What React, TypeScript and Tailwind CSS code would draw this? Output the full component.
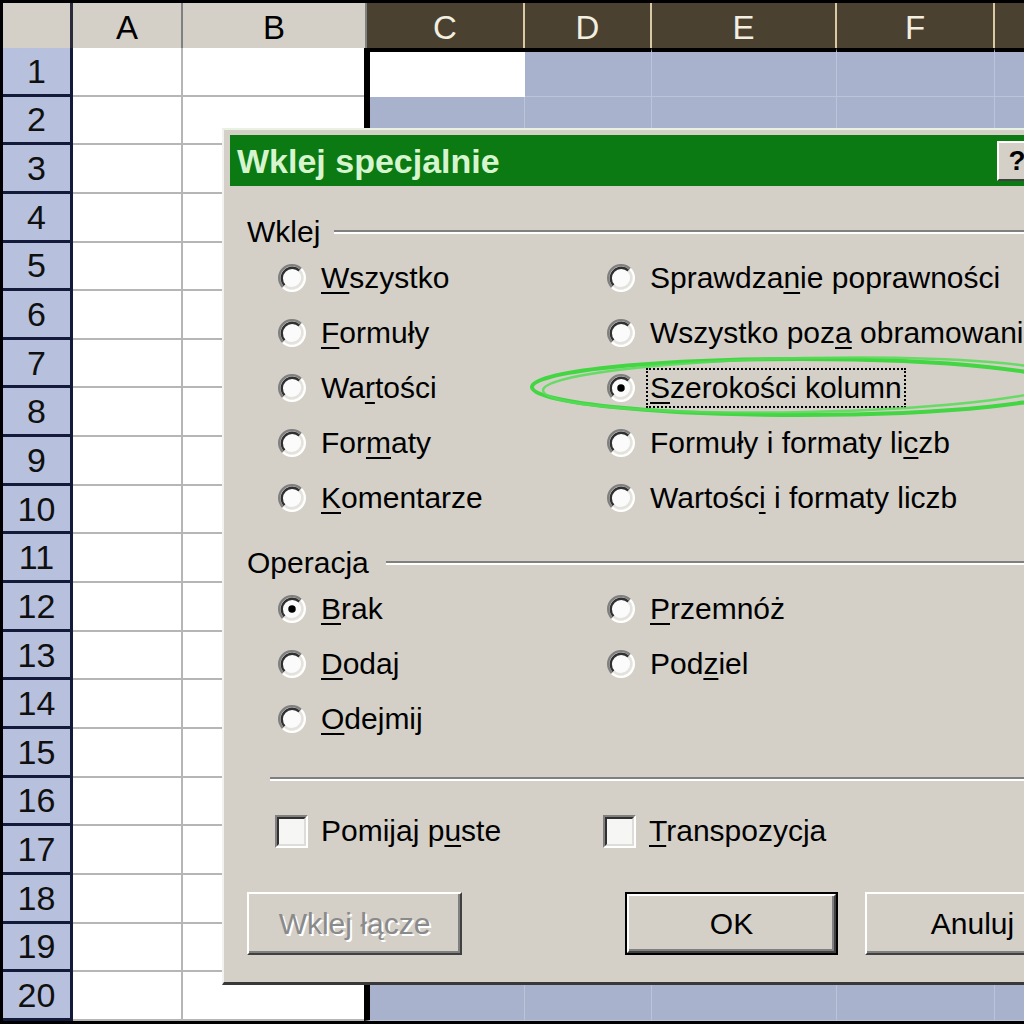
import type { ReactNode } from "react";

const headCols = ["C", "D", "E", "F", "G"];

const U = ({ children }: { children: ReactNode }) => (
  <span className="underline decoration-2 underline-offset-[4px]">{children}</span>
);

const Radio = ({ checked }: { checked?: boolean }) => (
  <svg viewBox="0 0 12 12" className="h-[28px] w-[28px] shrink-0">
    <circle cx="6" cy="6" r="5" fill="#fbfbfb" />
    <path d="M2.11 9.89A5.5 5.5 0 0 1 9.89 2.11" fill="none" stroke="#808080" strokeWidth="1" />
    <path d="M2.82 9.18A4.5 4.5 0 0 1 9.18 2.82" fill="none" stroke="#303030" strokeWidth="1" />
    <path d="M9.89 2.11A5.5 5.5 0 0 1 2.11 9.89" fill="none" stroke="#ffffff" strokeWidth="1" />
    <path d="M9.18 2.82A4.5 4.5 0 0 1 2.82 9.18" fill="none" stroke="#e4e2dc" strokeWidth="1" />
    {checked && <circle cx="6" cy="6" r="1.6" fill="#000" />}
  </svg>
);

const Option = ({ checked, children }: { checked?: boolean; children?: ReactNode }) => (
  <div className="flex h-[55px] items-center gap-[15px]">
    {children && <Radio checked={checked} />}
    {children}
  </div>
);

const Text = ({ children }: { children: ReactNode }) => (
  <span className="whitespace-nowrap text-[30px] leading-none text-black">{children}</span>
);

const Check = ({ children }: { children: ReactNode }) => (
  <div className="flex items-center gap-[13px]">
    <div className="h-[33px] w-[33px] border-2 border-t-[#808080] border-l-[#808080] border-r-white border-b-white">
      <div className="h-full w-full border-2 border-t-[#303030] border-l-[#303030] border-r-[#dedcd6] border-b-[#dedcd6] bg-[#f6f6f4]" />
    </div>
    <Text>{children}</Text>
  </div>
);

const GroupLabel = ({ label, gap }: { label: string; gap: string }) => (
  <div className="flex h-[36px] items-center">
    <span className="text-[30px] leading-none text-black">{label}</span>
    <div className={`${gap} flex-1 border-t-2 border-b-2 border-t-[#808080] border-b-white`} />
  </div>
);

export default function App() {
  return (
    <div className="relative h-[1024px] w-[1024px] overflow-hidden bg-black pl-[3px] pt-[3px] font-['Liberation_Sans',Arial,sans-serif]">
      {/* column headers */}
      <div className="grid h-[45px] w-[1260px] grid-cols-[70px_110px_184px_158px_127px_185px_158px_1fr]">
        <div className="border-r-[3px] border-b-2 border-r-[#2a2a3a] border-b-[#808080] bg-[#d4d0c8]" />
        <div className="flex items-center justify-center border-r-2 border-b-2 border-[#808080] bg-[#d4d0c8] text-[33px] text-black">A</div>
        <div className="flex items-center justify-center border-r-2 border-b-2 border-[#808080] bg-[#d4d0c8] text-[33px] text-black">B</div>
        {headCols.map((c) => (
          <div
            key={c}
            className="flex items-center justify-center border-r-2 border-b-2 border-r-[#d9c9a5] border-b-[#e4d8bc] bg-[#4a4130] text-[33px] text-[#f2eee0]"
          >
            {c}
          </div>
        ))}
      </div>

      {/* rows */}
      {Array.from({ length: 20 }, (_, i) => (
        <div key={i} className="grid h-[48.65px] w-[1260px] grid-cols-[70px_110px_181px_161px_127px_185px_158px_1fr]">
          <div className="flex items-center justify-center border-r-[3px] border-b-[3px] border-[#141b3a] bg-[#b7c0dc] text-[34px] leading-none text-[#101010]">
            {i + 1}
          </div>
          <div className="border-r-2 border-b-2 border-[#b6b6b6] bg-white" />
          <div className="border-b-2 border-[#b6b6b6] bg-white" />
          <div
            className={
              i === 0
                ? "border-t-4 border-l-[6px] border-t-black border-l-black bg-white"
                : "border-l-[6px] border-b border-r border-l-black border-b-[#bcc4da] border-r-[#bcc4da] bg-[#a9b2cd]"
            }
          />
          {[0, 1, 2, 3].map((k) => (
            <div
              key={k}
              className={
                i === 0
                  ? "border-t-4 border-r border-b border-t-black border-r-[#bcc4da] border-b-[#bcc4da] bg-[#a9b2cd]"
                  : "border-r border-b border-[#bcc4da] bg-[#a9b2cd]"
              }
            />
          ))}
        </div>
      ))}

      {/* dialog */}
      <div className="absolute left-[222px] top-[128px] h-[857px] w-[900px] border-t-2 border-l-2 border-b-[3px] border-t-[#e8f2e2] border-l-[#f2f2ee] border-b-[#383838] bg-[#d4d0c8]">
        <div className="mt-[5px] ml-[6px] mr-[4px] flex h-[51px] items-center bg-[#0b7a12]">
          <span className="pl-[7px] text-[34px] font-bold leading-none text-[#d6f5cf]">Wklej specjalnie</span>
          <div className="ml-auto flex gap-[4px] pr-[37px]">
            <div className="flex h-[40px] w-[40px] items-center justify-center border-2 border-t-white border-l-white border-r-[#404040] border-b-[#404040] bg-[#d4d0c8] text-[28px] font-bold leading-none text-black">
              ?
            </div>
            <div className="flex h-[40px] w-[40px] items-center justify-center border-2 border-t-white border-l-white border-r-[#404040] border-b-[#404040] bg-[#d4d0c8] text-[28px] font-bold leading-none text-black">
              ×
            </div>
          </div>
        </div>

        <div className="px-[23px]">
          <div className="mt-[28px]">
            <GroupLabel label="Wklej" gap="ml-[14px]" />
          </div>
          <div className="grid grid-cols-[329px_1fr] pl-[31px]">
            <Option>
              <Text><U>W</U>szystko</Text>
            </Option>
            <Option>
              <Text>Sprawdza<U>n</U>ie poprawności</Text>
            </Option>
            <Option>
              <Text><U>F</U>ormuły</Text>
            </Option>
            <Option>
              <Text>Wszystko poz<U>a</U> obramowania</Text>
            </Option>
            <Option>
              <Text>Wa<U>r</U>tości</Text>
            </Option>
            <Option checked>
              <span className="-ml-[4px] whitespace-nowrap border-2 border-dotted border-black px-[2px] py-[3px] text-[30px] leading-none text-black">
                <U>S</U>zerokości kolumn
              </span>
            </Option>
            <Option>
              <Text>For<U>m</U>aty</Text>
            </Option>
            <Option>
              <Text>Formuły i formaty li<U>c</U>zb</Text>
            </Option>
            <Option>
              <Text><U>K</U>omentarze</Text>
            </Option>
            <Option>
              <Text>Wartośc<U>i</U> i formaty liczb</Text>
            </Option>
          </div>

          <div className="mt-[20px]">
            <GroupLabel label="Operacja" gap="ml-[17px]" />
          </div>
          <div className="grid grid-cols-[329px_1fr] pl-[31px]">
            <Option checked>
              <Text><U>B</U>rak</Text>
            </Option>
            <Option>
              <Text><U>P</U>rzemnóż</Text>
            </Option>
            <Option>
              <Text><U>D</U>odaj</Text>
            </Option>
            <Option>
              <Text>Pod<U>z</U>iel</Text>
            </Option>
            <Option>
              <Text><U>O</U>dejmij</Text>
            </Option>
            <Option />
          </div>

          <div className="mt-[31px] ml-[23px] border-t-2 border-b-2 border-t-[#808080] border-b-white" />

          <div className="mt-[30px] grid h-[40px] grid-cols-[328px_1fr] items-center pl-[28px]">
            <Check>Pomijaj p<U>u</U>ste</Check>
            <Check><U>T</U>ranspozycja</Check>
          </div>

          <div className="mt-[41px] flex h-[63px]">
            <div className="flex w-[215px] items-center justify-center border-2 border-t-white border-l-white border-r-[#404040] border-b-[#404040] bg-[#d4d0c8] text-[30px] leading-none text-[#8a8a8a] shadow-[inset_-2px_-2px_0_#808080] [text-shadow:2px_2px_0_#ffffff]">
              Wklej łącze
            </div>
            <div className="ml-[163px] w-[213px] border-2 border-black">
              <div className="flex h-full w-full items-center justify-center border-2 border-t-white border-l-white border-r-[#404040] border-b-[#404040] bg-[#d4d0c8] text-[30px] leading-none text-black shadow-[inset_-2px_-2px_0_#808080]">
                OK
              </div>
            </div>
            <div className="ml-[27px] flex w-[215px] items-center justify-center border-2 border-t-white border-l-white border-r-[#404040] border-b-[#404040] bg-[#d4d0c8] text-[30px] leading-none text-black shadow-[inset_-2px_-2px_0_#808080]">
              Anuluj
            </div>
          </div>
        </div>
      </div>

      {/* hand-drawn highlight */}
      <svg className="absolute left-[525px] top-[345px] h-[85px] w-[540px] overflow-visible" viewBox="0 0 540 85">
        <ellipse cx="275" cy="42" rx="268" ry="28" fill="none" stroke="#42d642" strokeWidth="4" />
        <ellipse cx="280" cy="40" rx="262" ry="27" fill="none" stroke="#55dc55" strokeWidth="2.5" transform="rotate(-1.2 280 40)" opacity="0.85" />
      </svg>
    </div>
  );
}
